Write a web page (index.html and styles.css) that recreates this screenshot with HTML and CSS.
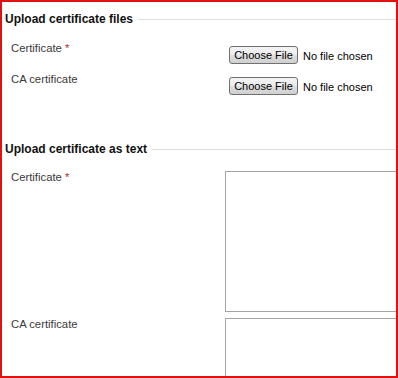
FILE: index.html
```html
<!DOCTYPE html>
<html>
<head>
<meta charset="utf-8">
<link rel="stylesheet" href="styles.css">
</head>
<body>
<div class="frame">
  <section class="group group-files">
    <div class="legend"><span class="legend-text">Upload certificate files</span><span class="legend-line"></span></div>
    <div class="row row-file">
      <div class="label">Certificate <span class="req">*</span></div>
      <div class="control"><button class="choose" type="button">Choose File</button><span class="nofile">No file chosen</span></div>
    </div>
    <div class="row row-file">
      <div class="label">CA certificate</div>
      <div class="control"><button class="choose" type="button">Choose File</button><span class="nofile">No file chosen</span></div>
    </div>
  </section>
  <section class="group group-text">
    <div class="legend"><span class="legend-text">Upload certificate as text</span><span class="legend-line"></span></div>
    <div class="row row-text">
      <div class="label">Certificate <span class="req">*</span></div>
      <div class="control"><textarea class="cert"></textarea></div>
    </div>
    <div class="row row-text">
      <div class="label">CA certificate</div>
      <div class="control"><textarea class="cert"></textarea></div>
    </div>
  </section>
</div>
</body>
</html>
```
FILE: styles.css
```css
html, body {
  margin: 0;
  padding: 0;
  background: #fff;
}
.frame {
  width: 398px;
  height: 378px;
  box-sizing: border-box;
  border: 2px solid #e31010;
  overflow: hidden;
  font-family: "Liberation Sans", Arial, sans-serif;
  font-size: 11px;
  line-height: 13px;
  color: #3a3a3a;
  background: #fff;
}
.group-files {
  padding-top: 11px;
}
.group-text {
  padding-top: 39px;
}
.legend {
  display: flex;
  align-items: center;
  height: 13px;
  padding-left: 3px;
}
.legend-text {
  font-weight: bold;
  font-size: 12px;
  color: #111;
  white-space: nowrap;
}
.legend-line {
  flex: 1;
  height: 1px;
  background: #dedede;
  margin-left: 5px;
}
.row {
  display: flex;
  align-items: flex-start;
}
.label {
  width: 214px;
  padding-left: 9px;
  flex: none;
  font-size: 11.3px;
}
.req {
  color: #c0282d;
}
.row-file {
  height: 31px;
}
.group-files .legend + .row {
  margin-top: 16px;
}
.control {
  display: flex;
  align-items: center;
}
.choose {
  box-sizing: border-box;
  height: 18px;
  width: 69px;
  margin: 4px 0 0 4px;
  padding: 0;
  border: 1px solid #707070;
  border-radius: 3px;
  background: linear-gradient(#f3f3f3, #ececec 48%, #dedede 52%, #d0d0d0);
  font-family: "Liberation Sans", Arial, sans-serif;
  font-size: 11px;
  color: #000;
}
.nofile {
  margin: 6px 0 0 5px;
  color: #000;
  white-space: nowrap;
}
.group-text .legend + .row {
  margin-top: 15px;
}
.row-text + .row-text {
  margin-top: 6px;
}
.cert {
  display: block;
  box-sizing: border-box;
  width: 200px;
  height: 141px;
  margin: 0;
  border: 1px solid #a5a5a5;
  resize: none;
  background: #fff;
}
```
